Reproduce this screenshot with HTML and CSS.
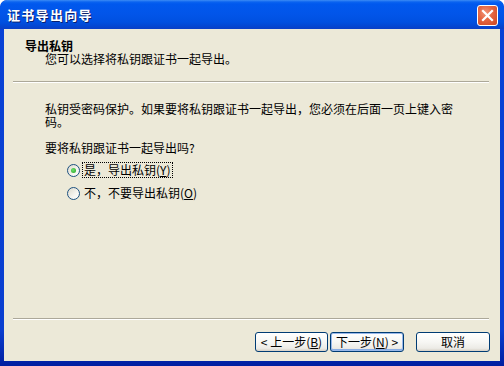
FILE: index.html
```html
<!DOCTYPE html>
<html lang="zh-CN">
<head>
<meta charset="utf-8">
<title>证书导出向导</title>
<link rel="stylesheet" href="styles.css">
</head>
<body>
<div class="window">
  <div class="titlebar">
    <span class="title">证书导出向导</span>
    <span class="close" aria-label="关闭">
      <svg width="21" height="21" viewBox="0 0 21 21">
        <path d="M6 6 L15 15 M15 6 L6 15" stroke="#fff" stroke-width="2.2" stroke-linecap="square" fill="none"/>
      </svg>
    </span>
  </div>
  <div class="client">
    <div class="header">
      <p class="h-text"><b class="h-title">导出私钥</b><br><span class="h-sub">您可以选择将私钥跟证书一起导出。</span></p>
    </div>
    <div class="sep sep-top"></div>
    <div class="body">
      <p class="para">私钥受密码保护。如果要将私钥跟证书一起导出，您必须在后面一页上键入密码。</p>
      <p class="question">要将私钥跟证书一起导出吗?</p>
      <div class="radios">
        <div class="radio-row">
          <span class="radio checked"><span class="dot"></span></span>
          <span class="label focus">是，导出私钥(<u>Y</u>)</span>
        </div>
        <div class="radio-row">
          <span class="radio"></span>
          <span class="label">不，不要导出私钥(<u>O</u>)</span>
        </div>
      </div>
    </div>
    <div class="sep sep-bottom"></div>
    <div class="buttons">
      <button class="btn">&lt; 上一步(<u>B</u>)</button>
      <button class="btn default">下一步(<u>N</u>) &gt;</button>
      <button class="btn cancel">取消</button>
    </div>
  </div>
</div>
</body>
</html>
```

FILE: styles.css
```css
* { box-sizing: border-box; }
html, body {
  margin: 0;
  padding: 0;
  background: #ffffff;
}
body {
  font-family: "Noto Sans CJK SC", "DejaVu Sans", sans-serif;
  font-size: 12px;
  color: #000;
}
.window {
  width: 504px;
  height: 366px;
  border-radius: 7px 7px 0 0;
  display: flex;
  flex-direction: column;
  overflow: hidden;
  background: linear-gradient(to bottom, #0842d6, #0a3fd0 90%, #001ea0);
}
.titlebar {
  height: 29px;
  flex: none;
  display: flex;
  align-items: center;
  justify-content: space-between;
  padding: 0 6px 0 7px;
  background: linear-gradient(to bottom,
    #3c8cf5 0px, #0a63f0 2px, #0058ee 4px, #0255e9 14px,
    #0050e0 22px, #0347d2 26px, #0a3fc6 29px);
  border-radius: 7px 7px 0 0;
}
.title {
  color: #fff;
  font-weight: bold;
  font-size: 13px;
  letter-spacing: 1.3px;
  text-shadow: 1px 1px 0 #0a1f6e;
  line-height: 14px;
  margin-top: 1px;
}
.close {
  width: 21px;
  height: 21px;
  border: 1px solid #fff;
  border-radius: 3px;
  background: radial-gradient(circle at 40% 35%, #f29478 0%, #e4643f 45%, #cc4520 100%);
  display: flex;
  align-items: center;
  justify-content: center;
  margin-top: 1px;
}
.close svg { display: block; margin: -1px; }
.client {
  flex: 1;
  margin: 0 4px 5px 4px;
  background: #ece9d8;
  display: flex;
  flex-direction: column;
}
.header {
  padding: 10px 0 16px 21px;
}
.h-text {
  margin: 0;
  line-height: 13px;
}
.h-title { font-weight: bold; }
.h-sub { padding-left: 20px; }
.sep {
  height: 2px;
  border-top: 1px solid #aca899;
  border-bottom: 1px solid #ffffff;
  margin: 0 11px 0 9px;
  flex: none;
}
.body {
  flex: 1;
  padding: 19px 0 0 41px;
}
.para {
  margin: 0;
  width: 414px;
  line-height: 13px;
}
.question {
  margin: 13px 0 0 0;
  line-height: 13px;
}
.radios {
  margin-top: 8px;
  padding-left: 22px;
  display: flex;
  flex-direction: column;
  gap: 7px;
}
.radio-row {
  display: flex;
  align-items: center;
  height: 16px;
}
.radio {
  width: 13px;
  height: 13px;
  border-radius: 50%;
  border: 1px solid #1c5180;
  background: linear-gradient(135deg, #dcd9cc 0%, #f6f5f0 60%, #ffffff 100%);
  display: flex;
  align-items: center;
  justify-content: center;
  margin-right: 2px;
  flex: none;
}
.dot {
  width: 5px;
  height: 5px;
  border-radius: 50%;
  background: radial-gradient(circle at 40% 40%, #6ee06e, #21a121);
}
.label {
  line-height: 14px;
  padding: 0 1px;
  border: 1px dotted transparent;
}
.label.focus { border-color: #000; }
.buttons {
  display: flex;
  justify-content: flex-end;
  padding: 12px 10px 9px 0;
}
.btn {
  font-family: "Noto Sans CJK SC", "DejaVu Sans", sans-serif;
  font-size: 12px;
  color: #000;
  height: 20px;
  width: 73px;
  padding: 0;
  border: 1px solid #003c74;
  border-radius: 3px;
  background: linear-gradient(to bottom, #ffffff 0%, #f7f7f4 50%, #ecebe6 85%, #d6d0c5 100%);
  line-height: 16px;
}
.btn.default {
  width: 74px;
  margin-left: 2px;
  box-shadow: inset 0 0 0 1px #98b8ea, inset 0 -1px 0 1px #89ade4;
}
.btn.cancel {
  width: 74px;
  margin-left: 12px;
}
u { text-decoration: underline; }
```
